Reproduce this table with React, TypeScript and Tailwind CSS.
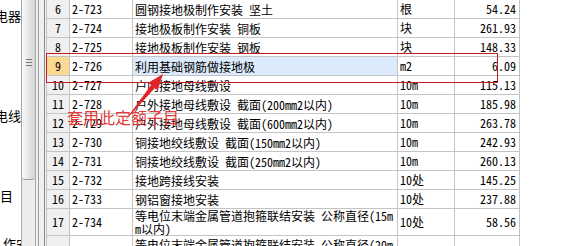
const rows = [
  { no: '6', code: '2-723', name: '圆钢接地极制作安装 坚土', unit: '根', price: '54.24' },
  { no: '7', code: '2-724', name: '接地极板制作安装 铜板', unit: '块', price: '261.93' },
  { no: '8', code: '2-725', name: '接地极板制作安装 钢板', unit: '块', price: '148.33' },
  { no: '9', code: '2-726', name: '利用基础钢筋做接地极', unit: 'm2', price: '6.09', active: true },
  { no: '10', code: '2-727', name: '户内接地母线敷设', unit: '10m', price: '115.13' },
  { no: '11', code: '2-728', name: '户外接地母线敷设 截面(200mm2以内)', unit: '10m', price: '185.98' },
  { no: '12', code: '2-729', name: '户外接地母线敷设 截面(600mm2以内)', unit: '10m', price: '263.78' },
  { no: '13', code: '2-730', name: '铜接地绞线敷设 截面(150mm2以内)', unit: '10m', price: '242.93' },
  { no: '14', code: '2-731', name: '铜接地绞线敷设 截面(250mm2以内)', unit: '10m', price: '260.13' },
  { no: '15', code: '2-732', name: '接地跨接线安装', unit: '10处', price: '145.25' },
  { no: '16', code: '2-733', name: '钢铝窗接地安装', unit: '10处', price: '237.88' },
  { no: '17', code: '2-734', name: '等电位末端金属管道抱箍联结安装 公称直径(15mm以内)', unit: '10处', price: '58.56', tall: true },
  { no: '', code: '', name: '等电位末端金属管道抱箍联结安装 公称直径(20mm以内)', unit: '', price: '', tall: true },
]

const font = { fontFamily: '"Noto Sans Mono CJK SC", "Noto Sans CJK SC", "Liberation Mono", monospace' }

export default function App() {
  return (
    <div className="relative flex h-[246px] w-[569px] overflow-hidden bg-white text-black">
      {/* LEFT TREE */}
      <div
        className="flex w-[21px] shrink-0 flex-col items-end overflow-hidden text-[13px] leading-[14px]"
        style={{ fontFamily: '"Noto Sans CJK SC", sans-serif' }}
      >
        <div className="mt-[9px] whitespace-nowrap">电器</div>
        <div className="mt-[86px] whitespace-nowrap">电线</div>
        <div className="mt-[66px] self-start whitespace-nowrap">目</div>
        <div className="mt-[34px] self-start whitespace-nowrap pl-[3px]">作安</div>
      </div>

      {/* SCROLLBAR */}
      <div className="flex w-[15px] shrink-0 flex-col border-x border-[#a8a8a8] bg-[#ececec]">
        <div className="flex h-[180px] flex-col items-center rounded-b-[3px] border-b border-[#9a9a9a] bg-gradient-to-r from-[#fafafa] to-[#d4d4d4]">
          <div className="mt-[59px] flex flex-col gap-[2px]">
            <div className="h-px w-[6px] bg-[#777]" />
            <div className="h-px w-[6px] bg-[#777]" />
            <div className="h-px w-[6px] bg-[#777]" />
          </div>
        </div>
      </div>

      {/* SPLITTER */}
      <div className="flex w-[10px] shrink-0 bg-[#f0f0f0]">
        <div className="ml-[2px] w-px bg-[#a0a0a0]" />
        <div className="ml-[5px] w-px bg-[#888]" />
      </div>

      {/* TABLE */}
      <div className="flex flex-col text-[12px]" style={font}>
        {rows.map((r, i) => (
          <div
            key={i}
            className={`grid grid-cols-[24px_63px_265px_57px_65px] border-b border-[#c4c4c4] ${
              r.tall ? 'h-[29px]' : 'h-[19px]'
            }`}
          >
            <div
              className={`flex items-center justify-center border-x border-[#c4c4c4] ${
                r.active ? 'bg-[#fcd991]' : 'bg-[#f0f0f0]'
              }`}
            >
              {r.no}
            </div>
            <div className="flex items-center border-r border-[#c4c4c4] pl-[2px]">{r.code}</div>
            <div
              className={`flex items-center border-r border-[#c4c4c4] pl-[2px] leading-[13px] ${
                r.active ? 'bg-[#dcebfb]' : ''
              } ${r.tall && !r.no ? 'items-start pt-[2px]' : ''}`}
            >
              <span className="break-all">{r.name}</span>
            </div>
            <div className="flex items-center border-r border-[#c4c4c4] pl-[2px]">{r.unit}</div>
            <div className="flex items-center justify-end border-r border-[#c4c4c4] pr-[3px]">{r.price}</div>
          </div>
        ))}
      </div>

      {/* ANNOTATION */}
      <div className="pointer-events-none absolute left-[46px] top-[53px] h-[30px] w-[452px] border border-[#c41e24]" />
      <svg className="pointer-events-none absolute left-0 top-0" width="569" height="246">
        <polygon
          points="124,122 151.1,84.9 148.3,82.7 163,74 157.7,90.3 154.9,88.1"
          fill="#e0242a"
        />
      </svg>
      <div
        className="pointer-events-none absolute left-[67px] top-[108px] text-[16px] leading-[18px] text-[#e23a3a]"
        style={{ fontFamily: '"Noto Sans CJK SC", sans-serif' }}
      >
        套用此定额子目
      </div>
    </div>
  )
}
